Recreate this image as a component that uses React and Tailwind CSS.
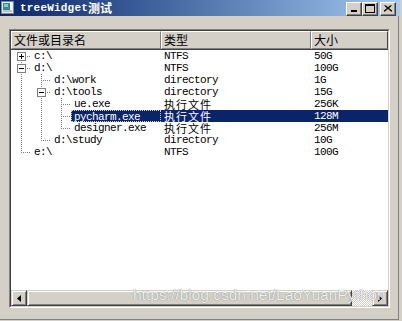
import React from "react";

const rows = [
  { name: "c:\\", type: "NTFS", size: "50G", level: 0, anc: [], first: true, next: true, box: "plus" },
  { name: "d:\\", type: "NTFS", size: "100G", level: 0, anc: [], next: true, box: "minus" },
  { name: "d:\\work", type: "directory", size: "1G", level: 1, anc: [true], next: true },
  { name: "d:\\tools", type: "directory", size: "15G", level: 1, anc: [true], next: true, box: "minus" },
  { name: "ue.exe", type: "执行文件", cjk: true, size: "256K", level: 2, anc: [true, true], next: true },
  { name: "pycharm.exe", type: "执行文件", cjk: true, size: "128M", level: 2, anc: [true, true], next: true, sel: true },
  { name: "designer.exe", type: "执行文件", cjk: true, size: "256M", level: 2, anc: [true, true], next: false },
  { name: "d:\\study", type: "directory", size: "10G", level: 1, anc: [true], next: false },
  { name: "e:\\", type: "NTFS", size: "100G", level: 0, anc: [], next: false },
];

const dot = { stroke: "#808080", strokeWidth: 1, strokeDasharray: "1 1", shapeRendering: "crispEdges" };

function Lines({ level, anc, first, next, box }) {
  const W = 20 * (level + 1);
  const x = 10 + 20 * level + 0.5;
  return (
    <svg width={W} height={12} className="shrink-0 block">
      {anc.map((c, a) =>
        c ? <line key={a} x1={10 + 20 * a + 0.5} y1={0} x2={10 + 20 * a + 0.5} y2={12} {...dot} /> : null
      )}
      <line x1={x} y1={first ? 6 : 0} x2={x} y2={next ? 12 : 6} {...dot} />
      <line x1={10 + 20 * level} y1={6.5} x2={W} y2={6.5} {...dot} />
      {box && (
        <g shapeRendering="crispEdges">
          <rect x={6 + 20 * level + 0.5} y={2.5} width={8} height={8} fill="#ffffff" stroke="#808080" />
          <line x1={8 + 20 * level} y1={6.5} x2={13 + 20 * level} y2={6.5} stroke="#000" />
          {box === "plus" && <line x1={x} y1={4} x2={x} y2={9} stroke="#000" />}
        </g>
      )}
    </svg>
  );
}

const mono = "font-['Liberation_Mono','Noto_Sans_CJK_SC',monospace] text-[11px] tracking-[-0.6px] leading-[12px]";
const cjk = "font-['Noto_Sans_CJK_SC',sans-serif] text-[11px] leading-[12px] tracking-[1px]";

function Row({ r }) {
  const sel = r.sel ? "bg-[#0a246a] text-white" : "text-black";
  return (
    <div className="flex h-[12px] whitespace-nowrap">
      <div className="w-[150px] shrink-0 flex">
        <Lines {...r} />
        <div
          className={`flex-1 ${mono} ${sel} ${
            r.sel ? "border border-dotted border-[#d8d0a8] pl-[2px] leading-[10px]" : "pl-[3px]"
          }`}
        >
          {r.name}
        </div>
      </div>
      <div className={`w-[150px] shrink-0 pl-[3px] ${sel} ${r.cjk ? cjk : mono}`}>{r.type}</div>
      <div className={`flex-1 pl-[3px] ${sel} ${mono}`}>{r.size}</div>
    </div>
  );
}

const raised =
  "bg-[#d4d0c8] border border-t-[#d4d0c8] border-l-[#d4d0c8] border-r-[#404040] border-b-[#404040] shadow-[inset_1px_1px_0_#ffffff,inset_-1px_-1px_0_#808080]";

function CapButton({ children, className = "" }) {
  return (
    <div
      className={`w-[16px] h-[14px] flex items-center justify-center bg-[#d4d0c8] border border-t-white border-l-white border-r-[#404040] border-b-[#404040] shadow-[inset_-1px_-1px_0_#808080] ${className}`}
    >
      {children}
    </div>
  );
}

export default function App() {
  return (
    <div className="w-[402px] h-[321px] bg-[#d4d0c8] relative overflow-hidden flex flex-col">
      {/* Title bar */}
      <div className="w-[400px] h-[16px] shrink-0 flex items-center bg-gradient-to-r from-[#0a246a] to-[#a6caf0]">
        <svg width="16" height="16" className="shrink-0">
          <rect x="1.5" y="1.5" width="12" height="12" fill="#e8e8e8" stroke="#7a8a9a" shapeRendering="crispEdges" />
          <rect x="3" y="3" width="7" height="9" fill="#2f8f8a" />
          <rect x="4" y="4" width="4" height="3" fill="#7fcfc0" />
          <rect x="10" y="3" width="2" height="9" fill="#ffffff" />
          <rect x="3" y="10" width="9" height="2" fill="#c0c0c0" />
        </svg>
        <div className="ml-[4px] h-[16px] flex items-center text-white font-bold font-['Liberation_Mono',monospace] text-[11px] tracking-[0.2px] leading-[16px] whitespace-nowrap">
          <span>treeWidget</span>
          <span className="font-['Noto_Sans_CJK_SC',sans-serif] text-[12px] leading-[16px] tracking-normal">测试</span>
        </div>
        <div className="ml-auto flex items-center mr-[4px] mt-[1px]">
          <CapButton>
            <svg width="8" height="8">
              <rect x="1" y="5" width="6" height="2" fill="#000" />
            </svg>
          </CapButton>
          <CapButton>
            <svg width="10" height="9">
              <rect x="0.5" y="0.5" width="9" height="8" fill="none" stroke="#000" shapeRendering="crispEdges" />
              <rect x="0" y="1" width="10" height="1" fill="#000" />
            </svg>
          </CapButton>
          <CapButton className="ml-[2px]">
            <svg width="8" height="7">
              <path d="M0.5 0.5 L7.5 6.5 M1.5 0.5 L8 6 M7.5 0.5 L0.5 6.5 M6.5 0.5 L0 6" stroke="#000" strokeWidth="1" fill="none" />
            </svg>
          </CapButton>
        </div>
      </div>

      {/* Client area */}
      <div className="w-[399px] h-[304px] border-r border-b border-[#808080] pt-[13px] pl-[9px]">
        <div className="w-[381px] h-[279px] border border-t-[#808080] border-l-[#808080] border-r-white border-b-white">
          <div className="w-full h-full border border-t-[#404040] border-l-[#404040] border-r-[#d4d0c8] border-b-[#d4d0c8] bg-white flex flex-col">
            {/* Header */}
            <div className="h-[19px] shrink-0 flex border-b border-[#404040] bg-[#d4d0c8] font-['Noto_Sans_CJK_SC',sans-serif] text-[12px] text-black">
              <div className="w-[150px] shrink-0 flex items-center pl-[2px] border border-t-white border-l-white border-r-[#808080] border-b-[#808080]">
                文件或目录名
              </div>
              <div className="w-[150px] shrink-0 flex items-center pl-[2px] border border-t-white border-l-white border-r-[#808080] border-b-[#808080]">
                类型
              </div>
              <div className="flex-1 flex items-center pl-[2px] border border-t-white border-l-white border-r-[#404040] border-b-[#808080]">
                大小
              </div>
            </div>

            {/* Rows */}
            <div className="flex-1 flex flex-col">
              {rows.map((r, i) => (
                <Row key={i} r={r} />
              ))}
            </div>

            {/* Horizontal scrollbar */}
            <div className="h-[16px] shrink-0 flex">
              <div className={`w-[16px] shrink-0 flex items-center justify-center ${raised}`}>
                <svg width="4" height="7">
                  <path d="M0 3.5 L4 0 L4 7 Z" fill="#000" />
                </svg>
              </div>
              <div className={`w-[325px] shrink-0 ${raised}`} />
              <div className="flex-1 bg-[repeating-conic-gradient(#d4d0c8_0%_25%,#ffffff_0%_50%)] bg-size-[2px_2px]" />
              <div className={`w-[16px] shrink-0 flex items-center justify-center ${raised}`}>
                <svg width="4" height="7">
                  <path d="M4 3.5 L0 0 L0 7 Z" fill="#000" />
                </svg>
              </div>
            </div>
          </div>
        </div>
      </div>

      {/* Watermark */}
      <div className="absolute left-[133px] top-[286px] font-['Liberation_Sans',Arial,sans-serif] text-[15.5px] leading-[18px] text-white/90 [text-shadow:0_0_1px_rgba(80,80,80,0.9)] whitespace-nowrap">
        https://blog.csdn.net/LaoYuanPython
      </div>
    </div>
  );
}
